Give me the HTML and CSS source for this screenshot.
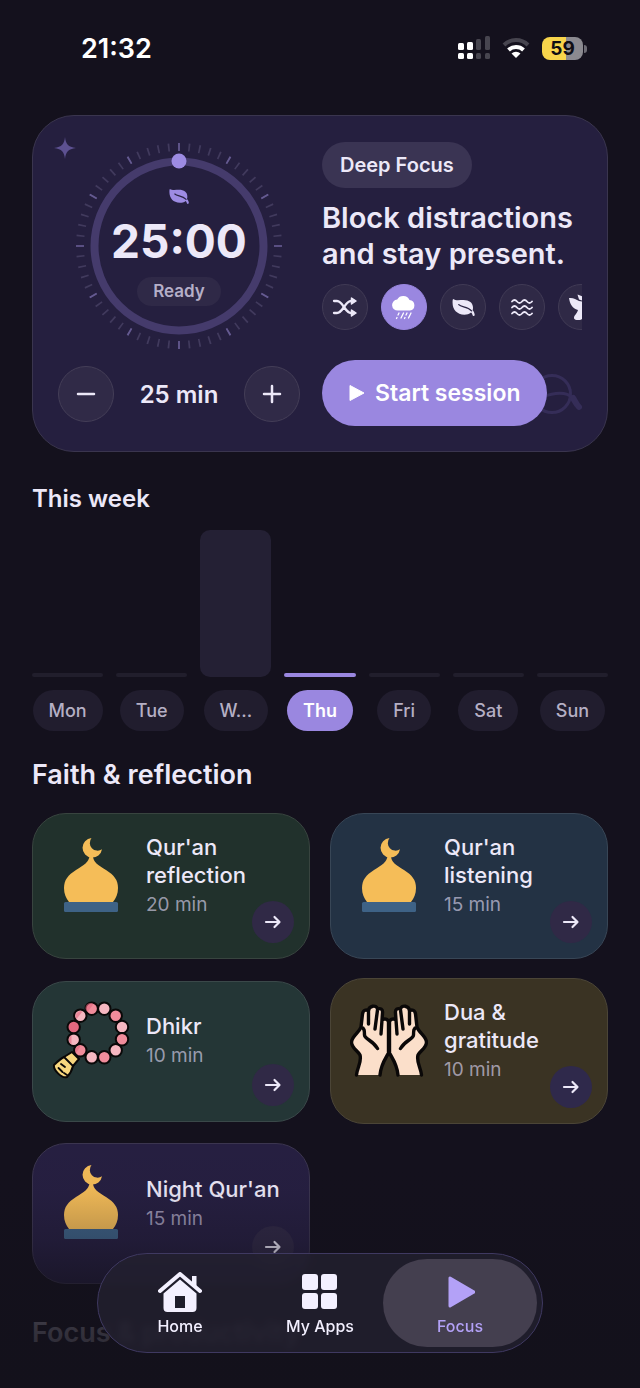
FILE: index.html
```html
<!DOCTYPE html>
<html lang="en">

<head>
    <meta charset="UTF-8">
    <meta name="viewport" content="width=device-width, initial-scale=1.0">
    <title>Focus</title>
    <link rel="stylesheet" href="styles.css">
</head>

<body>
    <!-- shared icons -->
    <svg class="sprite" aria-hidden="true">
        <symbol id="leaf" viewBox="0 0 24 20">
            <path fill="currentColor" d="M1 1C4 3 8 2 12 2c6 0 10 3 10 8 0 1 0 2-.4 3 1 1 1.900 2.500 2.200 4.500.1 1.500-2 2-2.300.5-.3-1.300-.8-2-1.500-2.700C18 17 15.500 17.500 13 17.500 5 17.500.5 12 .5 5 .5 3 .5 2 1 1z" />
            <path class="vein" d="M7 7c3 3 9 1.500 13.500 6.500" fill="none" stroke-width="1.400" stroke-linecap="round" />
        </symbol>
        <symbol id="arrow" viewBox="0 0 18 14">
            <path d="M2 7h13M10.500 2l5 5-5 5" fill="none" stroke="currentColor" stroke-width="2.200" stroke-linecap="round" stroke-linejoin="round" />
        </symbol>
        <symbol id="mosque" viewBox="0 0 78 78">
            <path fill="#f5bd58" d="M39.500 2A9.800 9.800 0 1 0 50 13.300 7.800 7.800 0 0 1 39.500 2z" />
            <path fill="#f5bd58" d="M37.500 20h3.500C41 26 46 29 54 34 62 39 66 44 66 52c0 6-2 10-5 14H17c-3-4-5-8-5-14 0-8 4-13 12-18 8-5 13-8 13.500-14z" />
            <rect x="12" y="66" width="54" height="10" rx="1.500" fill="#3e6286" />
        </symbol>
        <symbol id="hand" viewBox="0 0 78 78">
            <path fill="#fbdfca" d="M6.500 74C7 67 12 61 10 54 8 50 1.500 47 1.500 41 2 35 9 32 11 26l1.500-13c.5-4 4-5 6-3 0-5 8-7 9-2 3-1 5.500 0 5 4l-.5 7c2-2 6-1 6.500 2v31C36 57 31 63 30 74z" />
            <path fill="none" stroke="#0a0808" stroke-width="3.400" stroke-linecap="round" stroke-linejoin="round" d="M6.500 74C7 67 12 61 10 54 8 50 1.500 47 1.500 41 2 35 9 32 11 26l1.500-13c.5-4 4-5 6-3 0-5 8-7 9-2 3-1 5.500 0 5 4l-.5 7c2-2 6-1 6.500 2v31C36 57 31 63 30 74M18.500 10v13M27.500 9L25 28M32 19l-1 14M11 26c3.500 1 3.500 4 3.500 8 0 4 8 5 13 13.500" />
        </symbol>
    </svg>

    <div class="app">
        <header class="status-bar">
            <time class="clock">21:32</time>
            <div class="status-icons">
                <svg width="32" height="24" viewBox="0 0 32 24" aria-hidden="true">
                    <g fill="#fff">
                        <rect x="0" y="7" width="6" height="7" rx="1.500" />
                        <rect x="9" y="6" width="6" height="8" rx="1.500" />
                        <rect x="0" y="17" width="6" height="6" rx="1.500" />
                        <rect x="9" y="17" width="6" height="6" rx="1.500" />
                    </g>
                    <g fill="#47454f">
                        <rect x="18" y="3" width="5" height="11" rx="1.500" />
                        <rect x="27" y="0" width="5" height="14" rx="1.500" />
                        <rect x="18" y="17" width="5" height="6" rx="1.500" />
                        <rect x="27" y="17" width="5" height="6" rx="1.500" />
                    </g>
                </svg>
                <svg width="28" height="22" viewBox="0 0 28 22" aria-hidden="true">
                    <path d="M2 8a17 17 0 0 1 24 0" fill="none" stroke="#47454f" stroke-width="4" />
                    <path d="M6.500 13a11 11 0 0 1 15 0" fill="none" stroke="#fff" stroke-width="4" />
                    <path d="M14 21l-4.500-4.500a6.500 6.500 0 0 1 9 0z" fill="#fff" />
                </svg>
                <div class="battery">59</div>
            </div>
        </header>

        <main>
            <section class="hero">
                <svg class="sparkle" viewBox="0 0 22 22" aria-hidden="true">
                    <path d="M11 0c.8 7 3 10 11 11-8 1-10.200 4-11 11-.8-7-3-10-11-11 8-1 10.200-4 11-11z" />
                </svg>
                <svg class="loop" viewBox="0 0 60 42" aria-hidden="true">
                    <circle cx="28" cy="21" r="18.500" />
                    <path d="M18 24C34 18 44 20 49 25" />
                    <path class="tail" d="M49 25c2 3 3 6 6 9" />
                </svg>

                <div class="timer">
                    <div class="dial">
                        <svg class="dial-ring" viewBox="0 0 208 208" aria-hidden="true">
                            <circle class="ticks" cx="104" cy="104" r="99" pathLength="360" />
                            <circle class="ticks-major" cx="104" cy="104" r="99" pathLength="360" />
                            <circle class="track" cx="104" cy="104" r="84.500" />
                            <circle class="knob" cx="104" cy="19" r="7.500" />
                        </svg>
                        <div class="dial-text">
                            <svg class="dial-leaf" aria-hidden="true"><use href="#leaf" /></svg>
                            <div class="time-left">25:00</div>
                            <div class="state">Ready</div>
                        </div>
                    </div>
                    <div class="stepper">
                        <button class="step" type="button" aria-label="Less time">
                            <svg width="20" height="20" viewBox="0 0 20 20"><path d="M2 10h16" /></svg>
                        </button>
                        <span class="duration">25 min</span>
                        <button class="step" type="button" aria-label="More time">
                            <svg width="20" height="20" viewBox="0 0 20 20"><path d="M2 10h16M10 2v16" /></svg>
                        </button>
                    </div>
                </div>

                <div class="session">
                    <span class="tag">Deep Focus</span>
                    <h1>Block distractions and stay present.</h1>
                    <div class="sounds">
                        <button class="sound" type="button" aria-label="Shuffle">
                            <svg width="26" height="20" viewBox="0 0 26 20" fill="none" stroke="currentColor" stroke-width="2.300" stroke-linecap="round" stroke-linejoin="round">
                                <path d="M2 4h3c6 0 8 12 14 12h3M2 16h3c6 0 8-12 14-12h3" />
                                <path fill="currentColor" stroke-width="1.500" d="M19.500 1l4.500 3-4.500 3zM19.500 13l4.500 3-4.500 3z" />
                            </svg>
                        </button>
                        <button class="sound active" type="button" aria-label="Rain">
                            <svg width="24" height="25" viewBox="0 0 24 25" fill="currentColor" stroke="currentColor" stroke-linecap="round">
                                <path stroke="none" d="M6 15.500a5.500 5.500 0 0 1-.8-11A7 7 0 0 1 17.500 5 5.300 5.300 0 0 1 18 15.500z" />
                                <path fill="none" stroke-width="1.300" d="M7 18l-1 2M11.500 18l-2.500 5M15 18l-1 2M19 18l-2.500 5M5 22.500l-.5 1M13 22.500l-.5 1" />
                            </svg>
                        </button>
                        <button class="sound" type="button" aria-label="Forest">
                            <svg width="23" height="19"><use href="#leaf" /></svg>
                        </button>
                        <button class="sound" type="button" aria-label="Waves">
                            <svg width="22" height="18" viewBox="0 0 22 18" fill="none" stroke="currentColor" stroke-width="1.800" stroke-linecap="round">
                                <path d="M1 3.500q2.500-3 5 0t5 0 5 0 5 0M1 9.500q2.500-3 5 0t5 0 5 0 5 0M1 15.500q2.500-3 5 0t5 0 5 0 5 0" />
                            </svg>
                        </button>
                        <button class="sound" type="button" aria-label="Birds">
                            <svg width="26" height="26" viewBox="0 0 26 26" fill="currentColor">
                                <path d="M1 4c4-.5 7 1 10 3l8 1 6 3-6 2c-1 4-4 5-5 7l1 3c0 4-9 4-9 1 0-3 3-4 4-8C4 14 2 10 1 4z" />
                                <path d="M9.500.5L16 3v4l-5-1.500z" />
                            </svg>
                        </button>
                    </div>
                    <button class="start" type="button">
                        <svg width="16" height="18" viewBox="0 0 16 18" aria-hidden="true"><path d="M1 1.500v15l14-7.500z" fill="currentColor" stroke="currentColor" stroke-linejoin="round" /></svg>
                        Start session
                    </button>
                </div>
            </section>

            <section class="week">
                <h2>This week</h2>
                <ul class="chart">
                    <li><span class="bar"></span><span class="day">Mon</span></li>
                    <li><span class="bar"></span><span class="day">Tue</span></li>
                    <li><span class="bar full"></span><span class="day">W...</span></li>
                    <li class="today"><span class="bar"></span><span class="day">Thu</span></li>
                    <li><span class="bar"></span><span class="day">Fri</span></li>
                    <li><span class="bar"></span><span class="day">Sat</span></li>
                    <li><span class="bar"></span><span class="day">Sun</span></li>
                </ul>
            </section>

            <section class="faith">
                <h2 class="large">Faith &amp; reflection</h2>
                <div class="cards">
                    <a class="card green" href="#reflection">
                        <svg class="picture" aria-hidden="true"><use href="#mosque" /></svg>
                        <div class="info">
                            <h3>Qur'an reflection</h3>
                            <p>20 min</p>
                        </div>
                        <span class="go"><svg width="18" height="14"><use href="#arrow" /></svg></span>
                    </a>
                    <a class="card blue" href="#listening">
                        <svg class="picture" aria-hidden="true"><use href="#mosque" /></svg>
                        <div class="info">
                            <h3>Qur'an listening</h3>
                            <p>15 min</p>
                        </div>
                        <span class="go"><svg width="18" height="14"><use href="#arrow" /></svg></span>
                    </a>
                    <a class="card teal" href="#dhikr">
                        <svg class="picture" viewBox="0 0 78 78" aria-hidden="true">
                            <g stroke="#0a0808" stroke-width="2" stroke-linejoin="round" stroke-linecap="round">
                                <path fill="#f8d77e" d="M20 51l7 7-6 7c-1 4-3 8-6 11-5 2-14-7-13-12 3-3 6-6 10-8z" />
                                <path fill="none" stroke-width="1.800" d="M12 56l9 9M9 63l4 3M6.500 67l4 4M12 72l3 2" />
                                <g fill="#f6b7c1">
                                    <circle cx="52.300" cy="7.700" r="6.200" />
                                    <circle cx="70" cy="26" r="6.200" />
                                    <circle cx="63.700" cy="49.300" r="6.200" />
                                    <circle cx="39.700" cy="56.300" r="6.200" />
                                    <circle cx="21.700" cy="38.700" r="6.200" />
                                    <circle cx="28.300" cy="14.700" r="6.200" />
                                </g>
                                <g fill="#f08c9b">
                                    <circle cx="63.700" cy="14.700" r="6.200" />
                                    <circle cx="70" cy="38.300" r="6.200" />
                                    <circle cx="52.300" cy="56.300" r="6.200" />
                                    <circle cx="28.300" cy="49.300" r="6.200" />
                                    <circle cx="39.700" cy="7.700" r="6.200" />
                                </g>
                                <circle cx="21.700" cy="26" r="6.200" fill="#e2687f" />
                            </g>
                            <g fill="#e2687f" opacity=".6">
                                <path d="M35.500 11a5 5 0 0 1 6-8zM24.500 18a5 5 0 0 1 6-7.500zM24 52a5 5 0 0 1 5-7.500zM19.500 43.200a5 5 0 0 1 0-9z" />
                            </g>
                        </svg>
                        <div class="info">
                            <h3>Dhikr</h3>
                            <p>10 min</p>
                        </div>
                        <span class="go"><svg width="18" height="14"><use href="#arrow" /></svg></span>
                    </a>
                    <a class="card olive" href="#dua">
                        <svg class="picture" viewBox="0 0 78 78" aria-hidden="true">
                            <use href="#hand" width="78" height="78" />
                            <use href="#hand" width="78" height="78" transform="translate(78 0) scale(-1 1)" />
                        </svg>
                        <div class="info">
                            <h3>Dua &amp; gratitude</h3>
                            <p>10 min</p>
                        </div>
                        <span class="go"><svg width="18" height="14"><use href="#arrow" /></svg></span>
                    </a>
                    <a class="card violet" href="#night">
                        <svg class="picture" aria-hidden="true"><use href="#mosque" /></svg>
                        <div class="info">
                            <h3>Night Qur'an</h3>
                            <p>15 min</p>
                        </div>
                        <span class="go"><svg width="18" height="14"><use href="#arrow" /></svg></span>
                    </a>
                </div>
            </section>

            <section class="productivity">
                <h2 class="large">Focus &amp; productivity</h2>
            </section>
        </main>

        <div class="fade"></div>

        <nav class="tab-bar">
            <a class="tab" href="#home">
                <svg width="44" height="40" viewBox="0 0 44 40" fill="currentColor" aria-hidden="true">
                    <path d="M2 19L22 2l20 17" fill="none" stroke="currentColor" stroke-width="4" stroke-linecap="round" stroke-linejoin="round" />
                    <path d="M34 4h4.500v11L34 11z" />
                    <path fill-rule="evenodd" d="M22 7.500l16.500 14V36a4 4 0 0 1-4 4h-25a4 4 0 0 1-4-4V21.500zM17 24v12h10V24z" />
                </svg>
                Home
            </a>
            <a class="tab" href="#apps">
                <svg width="36" height="40" viewBox="0 0 36 40" fill="currentColor" aria-hidden="true">
                    <rect x="0" y="2" width="16" height="16" rx="3" />
                    <rect x="19" y="2" width="16" height="16" rx="3" />
                    <rect x="0" y="21" width="16" height="16" rx="3" />
                    <rect x="19" y="21" width="16" height="16" rx="3" />
                </svg>
                My Apps
            </a>
            <a class="tab active" href="#focus">
                <svg width="30" height="40" viewBox="0 0 30 40" fill="currentColor" aria-hidden="true">
                    <path d="M5 6v28l24-14z" stroke="currentColor" stroke-width="3" stroke-linejoin="round" />
                </svg>
                Focus
            </a>
        </nav>
    </div>
</body>

</html>
```
FILE: styles.css
```css
* {
    box-sizing: border-box;
}

body {
    margin: 0;
    background-color: #14111d;
    color: #ece8f8;
    font-family: Inter, "Liberation Sans", sans-serif;
}

h1, h2, h3, p, ul {
    margin: 0;
    padding: 0;
}

button {
    border: none;
    padding: 0;
    font-family: inherit;
    color: inherit;
    cursor: pointer;
}

a {
    color: inherit;
    text-decoration: none;
}

.sprite {
    position: absolute;
    width: 0;
    height: 0;
}

.app {
    position: relative;
    height: 100vh;
    overflow: hidden;
}

/* status bar */
.status-bar {
    display: flex;
    align-items: center;
    justify-content: space-between;
    height: 96px;
    padding: 0 57px 0 81px;
}

.clock {
    font-size: 27px;
    font-weight: 600;
    color: #fff;
}

.status-icons {
    display: flex;
    align-items: center;
    gap: 12px;
}

.battery {
    position: relative;
    width: 41px;
    height: 23px;
    border-radius: 8px;
    background: linear-gradient(to right, #f8d54b 59%, #8b8a90 59%);
    color: #100e14;
    font-size: 19px;
    font-weight: 700;
    line-height: 23px;
    text-align: center;
}

.battery::after {
    content: '';
    position: absolute;
    top: 8px;
    right: -4px;
    width: 3px;
    height: 8px;
    border-radius: 0 3px 3px 0;
    background-color: #6d6b74;
}

main {
    padding: 19px 32px 0;
}

/* hero */
.hero {
    position: relative;
    display: grid;
    grid-template-columns: minmax(0, 242fr) minmax(0, 260fr);
    gap: 22px;
    padding: 26px 25px 25px;
    border: 1px solid #3a354e;
    border-radius: 42px;
    background-color: #251f3f;
}

.sparkle {
    position: absolute;
    top: 21px;
    left: 21px;
    width: 22px;
    height: 22px;
    fill: #5d5191;
}

.loop {
    position: absolute;
    right: 23px;
    bottom: 36px;
    width: 60px;
    height: 42px;
    fill: none;
    stroke: #352d58;
    stroke-width: 3px;
    stroke-linecap: round;
}

.loop .tail {
    stroke-width: 6px;
}

.timer {
    display: flex;
    flex-direction: column;
    gap: 16px;
}

.dial {
    display: grid;
    justify-items: center;
}

.dial-ring,
.dial-text {
    grid-area: 1 / 1;
}

.dial-ring {
    width: 208px;
    height: 208px;
}

.dial-ring circle {
    fill: none;
}

.dial-ring .ticks {
    stroke: #413a5d;
    stroke-width: 8px;
    stroke-dasharray: 1 5;
    stroke-dashoffset: .5;
}

.dial-ring .ticks-major {
    stroke: #655a92;
    stroke-width: 8px;
    stroke-dasharray: 1 29;
    stroke-dashoffset: .5;
}

.dial-ring .track {
    stroke: #453b6c;
    stroke-width: 8px;
}

.dial-ring .knob {
    fill: #9d8be3;
}

.dial-text {
    display: flex;
    flex-direction: column;
    align-items: center;
    padding-top: 46px;
}

.dial-leaf {
    width: 20px;
    height: 17px;
    color: #9d8be3;
}

.vein {
    stroke: #2a2444;
}

.time-left {
    margin: 8px 0;
    font-size: 46px;
    font-weight: 700;
    line-height: 56px;
}

.state {
    padding: 0 16px;
    border-radius: 15px;
    background-color: #2f2947;
    color: #b5afc8;
    font-size: 17px;
    font-weight: 600;
    line-height: 29px;
}

.stepper {
    display: flex;
    align-items: center;
    justify-content: space-between;
}

.step {
    display: grid;
    place-items: center;
    width: 56px;
    height: 56px;
    border: 1px solid #443e57;
    border-radius: 50%;
    background-color: #302a47;
}

.step path {
    stroke: currentColor;
    stroke-width: 2.5px;
    stroke-linecap: round;
}

.duration {
    font-size: 24px;
    font-weight: 600;
}

.session {
    position: relative;
    display: flex;
    flex-direction: column;
    align-items: flex-start;
    gap: 12px;
}

.tag {
    padding: 0 18px;
    border-radius: 23px;
    background-color: #3a3453;
    font-size: 20px;
    font-weight: 600;
    line-height: 46px;
}

h1 {
    font-size: 29px;
    font-weight: 600;
    line-height: 36px;
}

.sounds {
    display: flex;
    gap: 13px;
    width: 100%;
    overflow: hidden;
}

.sound {
    display: grid;
    flex: none;
    place-items: center;
    width: 46px;
    height: 46px;
    border: 1px solid #413b55;
    border-radius: 50%;
    background-color: #2f2946;
}

.sound.active {
    border-color: #9a87e0;
    background-color: #9a87e0;
    color: #fff;
}

.start {
    display: flex;
    align-items: center;
    gap: 10px;
    height: 66px;
    margin-top: 18px;
    padding: 0 27px;
    border-radius: 33px;
    background-color: #9a87e0;
    color: #fff;
    font-size: 23px;
    font-weight: 600;
}

/* week chart */
h2 {
    font-size: 24px;
    font-weight: 600;
    line-height: 32px;
}

h2.large {
    font-size: 27px;
}

.week {
    margin-top: 31px;
}

.chart {
    display: grid;
    grid-template-columns: repeat(7, minmax(0, 1fr));
    gap: 13px;
    margin-top: 15px;
    list-style: none;
}

.chart li {
    display: flex;
    flex-direction: column;
    align-items: center;
    justify-content: flex-end;
    gap: 13px;
}

.bar {
    width: 100%;
    height: 4px;
    border-radius: 2px;
    background-color: #211e2c;
}

.bar.full {
    height: 147px;
    border-radius: 10px;
    background-color: #242034;
}

.day {
    padding: 0 16px;
    border-radius: 21px;
    background-color: #211d2e;
    color: #b5afc4;
    font-size: 18px;
    font-weight: 500;
    line-height: 41px;
}

.today .bar {
    background-color: #9a87e0;
}

.today .day {
    background-color: #9a87e0;
    color: #fff;
    font-weight: 600;
}

/* cards */
.faith {
    margin-top: 28px;
}

.cards {
    display: grid;
    grid-template-columns: repeat(2, minmax(0, 1fr));
    align-items: center;
    gap: 19px 20px;
    margin-top: 22px;
}

.card {
    display: grid;
    grid-template-columns: 78px minmax(0, 1fr);
    grid-template-rows: auto 27px;
    align-items: center;
    column-gap: 16px;
    padding: 19px 15px 15px 19px;
    border: 1px solid #3a3a48;
    border-radius: 34px;
}

.card.green {
    border-color: #38443f;
    background-color: #21312c;
}

.card.blue {
    border-color: #384656;
    background-color: #233244;
}

.card.teal {
    border-color: #3a4849;
    background-color: #243636;
}

.card.olive {
    border-color: #4b4537;
    background-color: #3a3323;
}

.card.violet {
    border-color: #3b354f;
    background-color: #261f41;
}

.picture {
    width: 78px;
    height: 78px;
}

.card h3 {
    font-size: 22px;
    font-weight: 500;
    line-height: 28px;
}

.card p {
    margin-top: 4px;
    color: rgba(221, 214, 240, .65);
    font-size: 19px;
    line-height: 23px;
}

.go {
    display: grid;
    grid-column: 2;
    place-items: center;
    align-self: end;
    justify-self: end;
    width: 42px;
    height: 42px;
    border-radius: 50%;
    background-color: #302946;
}

.olive .go {
    background-color: #2f294b;
}

.productivity {
    margin-top: 33px;
}

/* bottom navigation */
.fade {
    position: absolute;
    right: 0;
    bottom: 0;
    left: 0;
    height: 248px;
    background: linear-gradient(rgba(19, 17, 27, 0), rgba(19, 17, 27, .04) 20%, rgba(19, 17, 27, .25) 40%, rgba(19, 17, 27, .6) 58%, rgba(19, 17, 27, .84) 75%, rgba(19, 17, 27, .95));
    pointer-events: none;
}

.tab-bar {
    position: absolute;
    bottom: 35px;
    left: 50%;
    display: grid;
    grid-template-columns: repeat(3, 140px);
    padding: 5px 12px;
    border: 1px solid #3f3961;
    border-radius: 50px;
    background-color: rgba(35, 32, 47, .8);
    backdrop-filter: blur(3px);
    transform: translateX(-50%);
}

.tab {
    display: flex;
    flex-direction: column;
    align-items: center;
    gap: 4px;
    height: 88px;
    margin: 0 -7px;
    padding-top: 13px;
    border-radius: 44px;
    color: #f3f0ff;
    font-size: 16px;
    font-weight: 500;
    line-height: 20px;
}

.tab.active {
    background-color: #443f4f;
    color: #b3a1f7;
}
```
